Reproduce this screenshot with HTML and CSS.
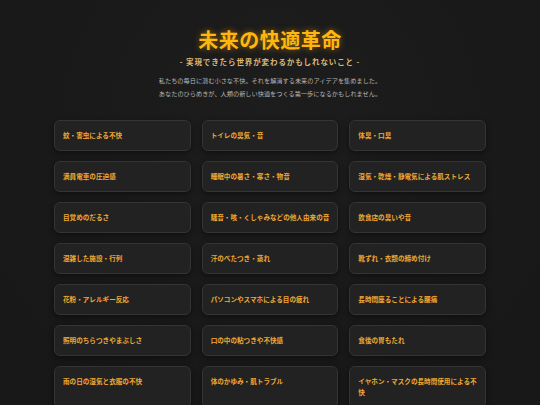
FILE: index.html
```html
<!DOCTYPE html>
<html lang="ja">
<head>
    <meta charset="UTF-8">
    <meta name="viewport" content="width=device-width, initial-scale=1.0">
    <title>未来の快適革命</title>
    <link rel="stylesheet" href="styles.css">
</head>
<body>
    <div class="header">
        <h1>未来の快適革命</h1>
        <p class="subtitle">- 実現できたら世界が変わるかもしれないこと -</p>
        <p class="lead">私たちの毎日に潜む小さな不快。それを解消する未来のアイデアを集めました。<br>あなたのひらめきが、人類の新しい快適をつくる第一歩になるかもしれません。</p>
    </div>

    <div class="grid">
        <div class="card">蚊・害虫による不快</div>
        <div class="card">トイレの臭気・音</div>
        <div class="card">体臭・口臭</div>
        <div class="card">満員電車の圧迫感</div>
        <div class="card">睡眠中の暑さ・寒さ・物音</div>
        <div class="card">湿気・乾燥・静電気による肌ストレス</div>
        <div class="card">目覚めのだるさ</div>
        <div class="card">騒音・咳・くしゃみなどの他人由来の音</div>
        <div class="card">飲食店の臭いや音</div>
        <div class="card">混雑した施設・行列</div>
        <div class="card">汗のべたつき・蒸れ</div>
        <div class="card">靴ずれ・衣類の締め付け</div>
        <div class="card">花粉・アレルギー反応</div>
        <div class="card">パソコンやスマホによる目の疲れ</div>
        <div class="card">長時間座ることによる腰痛</div>
        <div class="card">照明のちらつきやまぶしさ</div>
        <div class="card">口の中の粘つきや不快感</div>
        <div class="card">食後の胃もたれ</div>
        <div class="card">雨の日の湿気と衣服の不快</div>
        <div class="card">体のかゆみ・肌トラブル</div>
        <div class="card">イヤホン・マスクの長時間使用による不快</div>
    </div>
</body>
</html>
```

FILE: styles.css
```css
body {
    margin: 0;
    padding: 0;
    background-color: #1a1a1a;
    background-image: radial-gradient(circle at 50% 30%, #1d1d1d 0%, #181818 80%);
    color: #bbb;
    font-family: "Noto Sans CJK JP", "Noto Sans", sans-serif;
    min-height: 405px;
}

.header {
    text-align: center;
    padding-top: 28px;
}

.header h1 {
    margin: 0;
    font-size: 20px;
    line-height: 24px;
    font-weight: bold;
    color: #ffb70f;
    letter-spacing: 0.5px;
    text-shadow: 0 0 6px rgba(255, 170, 0, 0.55);
}

.subtitle {
    margin: 4px 0 0;
    font-size: 7.5px;
    line-height: 12px;
    font-weight: bold;
    letter-spacing: 0.9px;
    color: #dcb877;
}

.lead {
    margin: 6px 0 0;
    font-size: 6.2px;
    line-height: 13px;
    color: #b5b5b5;
}

.grid {
    width: 432px;
    margin: 20px auto 0;
    display: grid;
    grid-template-columns: repeat(3, 1fr);
    column-gap: 11px;
    row-gap: 10px;
}

.card {
    background-color: #222;
    border: 1px solid #343434;
    border-radius: 6px;
    padding: 9px 7px 9px 8px;
    font-size: 6.6px;
    line-height: 11px;
    font-weight: bold;
    color: #f0a832;
    box-shadow: 0 2px 6px rgba(0, 0, 0, 0.45);
}
```
